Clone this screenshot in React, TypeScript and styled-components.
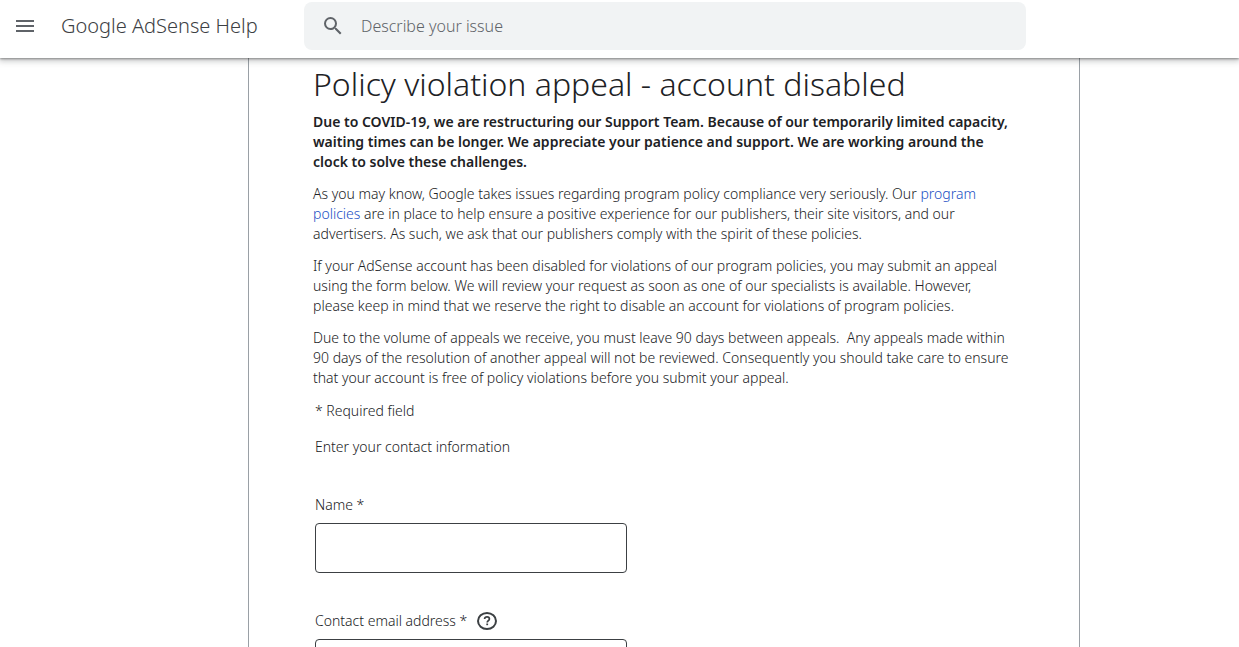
import React from "react";
import styled, { createGlobalStyle } from "styled-components";

const GlobalStyle = createGlobalStyle`
  *, *::before, *::after { box-sizing: border-box; }
  html { scrollbar-width: none; }
  body {
    margin: 0;
    background: #fff;
    color: #202124;
    font-family: "Noto Sans", "Liberation Sans", sans-serif;
    font-size: 14px;
    line-height: 20px;
  }
`;

const Page = styled.div`
  display: flex;
  flex-direction: column;
  min-height: 100vh;
`;

const Header = styled.header`
  position: sticky;
  top: 0;
  z-index: 1;
  display: flex;
  align-items: center;
  padding: 2px 213px 8px 13px;
  background: #fff;
  box-shadow: 0 1px 2px rgba(0, 0, 0, 0.35), 0 2px 6px 1px rgba(60, 64, 67, 0.3);
`;

const IconButton = styled.button`
  display: flex;
  padding: 0;
  border: 0;
  background: none;
  color: #5f6368;
  cursor: pointer;
`;

const Brand = styled.a`
  flex: 0 0 243px;
  margin-left: 24px;
  color: #3c4043;
  font-size: 20px;
  font-weight: 300;
  line-height: 24px;
  text-decoration: none;
  white-space: nowrap;
`;

const Search = styled.form`
  display: flex;
  flex: 1;
  align-items: center;
  gap: 16px;
  height: 48px;
  padding: 0 17px;
  border-radius: 8px;
  background: #f1f3f4;
`;

const SearchInput = styled.input`
  flex: 1;
  min-width: 0;
  padding: 0;
  border: 0;
  outline: 0;
  background: transparent;
  color: #202124;
  font: inherit;
  font-size: 16px;
  font-weight: 300;
  line-height: 24px;
  &::placeholder { color: #5f6368; opacity: 1; }
`;

const Main = styled.main`
  display: flex;
  flex: 1;
  padding: 0 159px 0 248px;
`;

const Article = styled.article`
  flex: 1;
  min-width: 0;
  padding: 6px 64px 0;
  border: solid #9aa0a6;
  border-width: 0 1px;
`;

const Title = styled.h1`
  margin: 0 0 8px;
  font-size: 32px;
  font-weight: 300;
  line-height: 40px;
  white-space: nowrap;
`;

const Paragraph = styled.p<{ $strong?: boolean }>`
  margin: 0 0 12px;
  font-weight: ${({ $strong }) => ($strong ? 600 : 300)};
  white-space: nowrap;
`;

const Link = styled.a`
  color: #1a4fc4;
  text-decoration: none;
`;

const Form = styled.form`
  display: flex;
  flex-direction: column;
  padding: 1px 2px 0;
  font-weight: 300;
`;

const Note = styled.p`
  margin: 0 0 16px;
`;

const Field = styled.div`
  display: flex;
  flex-direction: column;
  gap: 8px;
  margin-top: 22px;
  padding-bottom: 16px;
`;

const LabelRow = styled.div`
  display: flex;
  align-items: center;
  gap: 9px;
  height: 20px;
`;

const TextInput = styled.input`
  width: 312px;
  max-width: 100%;
  height: 50px;
  padding: 0 12px;
  border: 1px solid #3c4043;
  border-radius: 4px;
  background: #fff;
  font: inherit;
`;

const MenuIcon = () => (
  <svg width="24" height="24" viewBox="0 0 24 24" fill="currentColor" aria-hidden="true">
    <path d="M3 18h18v-2H3v2zm0-5h18v-2H3v2zm0-7v2h18V6H3z" />
  </svg>
);

const SearchIcon = () => (
  <svg width="24" height="24" viewBox="0 0 24 24" fill="#5f6368" aria-hidden="true">
    <path d="M15.5 14h-.79l-.28-.27A6.471 6.471 0 0 0 16 9.5 6.5 6.5 0 1 0 9.5 16c1.61 0 3.09-.59 4.23-1.57l.27.28v.79l5 4.99L20.49 19l-4.99-5zm-6 0C7.01 14 5 11.99 5 9.5S7.01 5 9.5 5 14 7.01 14 9.5 11.99 14 9.5 14z" />
  </svg>
);

const HelpIcon = () => (
  <svg width="22" height="20" viewBox="1 2 22 20" fill="none" stroke="#3c4043" aria-hidden="true">
    <ellipse cx="12" cy="12" rx="9" ry="8" strokeWidth="2" />
    <path d="M9.6 10.1c0-1.4 1-2.3 2.4-2.3s2.4.8 2.4 2.1c0 1.5-2.2 1.9-2.2 3.5" strokeWidth="1.7" />
    <path d="M12.2 14.5v1.7" strokeWidth="1.8" />
  </svg>
);

export default function App() {
  return (
    <Page>
      <GlobalStyle />
      <Header>
        <IconButton type="button" aria-label="Main menu"><MenuIcon /></IconButton>
        <Brand href="#">Google AdSense Help</Brand>
        <Search role="search">
          <IconButton type="submit" aria-label="Search"><SearchIcon /></IconButton>
          <SearchInput type="text" aria-label="Describe your issue" placeholder="Describe your issue" />
        </Search>
      </Header>
      <Main>
        <Article>
          <Title>Policy violation appeal - account disabled</Title>
          <Paragraph $strong>
            Due to COVID-19, we are restructuring our Support Team. Because of our temporarily limited capacity,<br />
            waiting times can be longer. We appreciate your patience and support. We are working around the<br />
            clock to solve these challenges.
          </Paragraph>
          <Paragraph>
            As you may know, Google takes issues regarding program policy compliance very seriously. Our <Link href="#">program<br />
            policies</Link> are in place to help ensure a positive experience for our publishers, their site visitors, and our<br />
            advertisers. As such, we ask that our publishers comply with the spirit of these policies.
          </Paragraph>
          <Paragraph>
            If your AdSense account has been disabled for violations of our program policies, you may submit an appeal<br />
            using the form below. We will review your request as soon as one of our specialists is available. However,<br />
            please keep in mind that we reserve the right to disable an account for violations of program policies.
          </Paragraph>
          <Paragraph>
            Due to the volume of appeals we receive, you must leave 90 days between appeals.&nbsp; Any appeals made within<br />
            90 days of the resolution of another appeal will not be reviewed. Consequently you should take care to ensure<br />
            that your account is free of policy violations before you submit your appeal.
          </Paragraph>
          <Form>
            <Note>* Required field</Note>
            <Note>Enter your contact information</Note>
            <Field>
              <LabelRow><label htmlFor="name">Name *</label></LabelRow>
              <TextInput id="name" type="text" required />
            </Field>
            <Field>
              <LabelRow>
                <label htmlFor="email">Contact email address *</label>
                <IconButton type="button" aria-label="Help with contact email address"><HelpIcon /></IconButton>
              </LabelRow>
              <TextInput id="email" type="email" required />
            </Field>
          </Form>
        </Article>
      </Main>
    </Page>
  );
}
